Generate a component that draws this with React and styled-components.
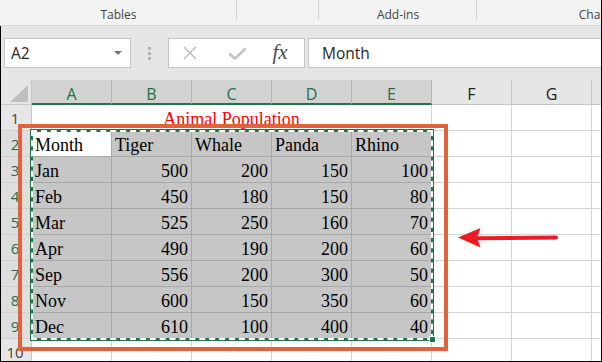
import React from 'react';
import styled, { createGlobalStyle } from 'styled-components';

const UI = '"Open Sans", "Noto Sans", Arial, sans-serif';
const SERIF = '"Liberation Serif", "Times New Roman", serif';
const GREEN = '#217346';

const GlobalStyle = createGlobalStyle`
  html, body { margin: 0; padding: 0; background: #fff; }
  body { overflow: hidden; }
`;

const Page = styled.div`
  position: relative;
  width: 602px;
  height: 362px;
  box-sizing: border-box;
  border-right: 1px solid #000;
  border-bottom: 1px solid #000;
  overflow: hidden;
  display: flex;
  flex-direction: column;
  font-family: ${UI};
`;

/* ribbon tab labels */
const Ribbon = styled.div`
  display: flex;
  flex-shrink: 0;
  height: 26px;
  box-sizing: border-box;
  background: #f3f3f3;
  border-bottom: 1px solid #d5d5d5;
  overflow: hidden;
`;
const RibbonGroup = styled.div`
  position: relative;
  flex: 0 0 ${p => p.$w}px;
  height: 25px;
  text-align: center;
  font-size: 12px;
  line-height: 30px;
  color: #444;
  white-space: nowrap;
  &::after {
    content: '';
    position: absolute;
    right: 0;
    top: 0;
    width: 1px;
    height: 20px;
    background: #d5d5d5;
  }
`;

/* name box + formula bar */
const FormulaArea = styled.div`
  display: flex;
  align-items: flex-start;
  flex-shrink: 0;
  height: 54px;
  box-sizing: border-box;
  padding: 12px 0 0 3px;
  background: #e6e6e6;
  border-left: 1px solid #000;
`;
const NameBox = styled.div`
  width: 127px;
  height: 30px;
  box-sizing: border-box;
  display: flex;
  align-items: center;
  justify-content: space-between;
  padding: 0 8px 0 6px;
  background: #fff;
  border: 1px solid #c6c6c6;
  font-size: 15.5px;
  color: #262626;
`;
const Caret = styled.span`
  width: 0;
  height: 0;
  border-left: 4px solid transparent;
  border-right: 4px solid transparent;
  border-top: 4px solid #777;
`;
const Splitter = styled.div`
  display: flex;
  flex-direction: column;
  gap: 2px;
  margin: 9px 0 0 17px;
`;
const Dot = styled.span`
  width: 3px;
  height: 3px;
  background: #b4b4b4;
`;
const ButtonBox = styled.div`
  display: flex;
  align-items: center;
  width: 137px;
  height: 30px;
  box-sizing: border-box;
  margin-left: 17px;
  background: #fff;
  border: 1px solid #c6c6c6;
`;
const IconSlot = styled.div`
  flex: 0 0 ${p => p.$w}px;
  display: flex;
  justify-content: center;
  align-items: center;
`;
const Fx = styled.span`
  font-family: ${SERIF};
  font-style: italic;
  font-size: 21px;
  color: #4a4a4a;
  line-height: 1;
  margin-top: -1px;
`;
const FormulaInput = styled.div`
  flex: 1;
  height: 30px;
  box-sizing: border-box;
  margin-left: 3px;
  display: flex;
  align-items: center;
  padding-left: 13px;
  background: #fff;
  border: 1px solid #c6c6c6;
  border-right: none;
  font-size: 15.5px;
  color: #262626;
`;

/* worksheet grid */
const Sheet = styled.div`
  flex: 1;
  display: flex;
  flex-direction: column;
  overflow: hidden;
  background: #fff;
  border-left: 1px solid #000;
`;
const Row = styled.div`
  display: flex;
  flex-shrink: 0;
  height: ${p => p.$h || 26}px;
`;
const Corner = styled.div`
  flex: 0 0 31px;
  box-sizing: border-box;
  background: #e6e6e6;
  border-right: 1px solid #c6c6c6;
  border-bottom: 1px solid #c6c6c6;
  display: flex;
`;
const ColHead = styled.div`
  flex: 0 0 80px;
  box-sizing: border-box;
  display: flex;
  justify-content: center;
  align-items: center;
  padding-top: 4px;
  font-size: 16px;
  background: ${p => (p.$sel ? '#d2d2d2' : '#e6e6e6')};
  color: ${p => (p.$sel ? GREEN : '#222')};
  border-right: 1px solid ${p => (p.$sel ? '#b4b4b4' : '#c6c6c6')};
  border-bottom: ${p => (p.$sel ? `2px solid ${GREEN}` : '1px solid #c6c6c6')};
`;
const RowHead = styled.div`
  flex: 0 0 31px;
  box-sizing: border-box;
  display: flex;
  justify-content: center;
  align-items: center;
  padding-right: 2px;
  font-size: 15px;
  background: ${p => (p.$sel ? '#dedede' : '#e6e6e6')};
  color: ${p => (p.$sel ? GREEN : '#444')};
  border-right: 1px solid #c6c6c6;
  border-bottom: 1px solid #d0d0d0;
`;
const Cell = styled.div`
  flex: 0 0 ${p => p.$w || 80}px;
  box-sizing: border-box;
  display: flex;
  align-items: flex-end;
  justify-content: ${p => (p.$num ? 'flex-end' : p.$center ? 'center' : 'flex-start')};
  padding: 0 3px;
  overflow: hidden;
  white-space: nowrap;
  font-family: ${SERIF};
  font-size: 18px;
  color: ${p => p.$color || '#000'};
  background: ${p => (p.$sel && !p.$active ? '#c6c6c6' : '#fff')};
  border-right: 1px solid ${p => (p.$sel ? '#a8a8a8' : '#d4d4d4')};
  border-bottom: 1px solid ${p => (p.$sel ? '#a8a8a8' : '#d4d4d4')};
`;

/* things drawn over the grid */
const RedBox = styled.div`
  position: absolute;
  left: 18px;
  top: 124px;
  width: 430px;
  height: 227px;
  box-sizing: border-box;
  border: 4px solid #e0623f;
  pointer-events: none;
`;
const Marquee = styled.div`
  position: absolute;
  left: 30px;
  top: 129px;
  width: 404px;
  height: 212px;
  box-sizing: border-box;
  border: 3px solid ${GREEN};
  pointer-events: none;
  &::after {
    content: '';
    position: absolute;
    inset: -2px;
    border: 2px dashed #fff;
  }
`;
const FillHandle = styled.span`
  position: absolute;
  right: -5px;
  bottom: -5px;
  width: 5px;
  height: 5px;
  background: ${GREEN};
  border: 1px solid #fff;
  z-index: 1;
`;
const Arrow = styled.svg`
  position: absolute;
  left: 450px;
  top: 220px;
`;

const tabs = [
  { w: 237, label: 'Tables' },
  { w: 82, label: '' },
  { w: 158, label: 'Add-ins' },
  { w: 240, label: 'Charts' },
];

const cols = ['A', 'B', 'C', 'D', 'E', 'F', 'G', 'H'];

const data = [
  ['Month', 'Tiger', 'Whale', 'Panda', 'Rhino'],
  ['Jan', 500, 200, 150, 100],
  ['Feb', 450, 180, 150, 80],
  ['Mar', 525, 250, 160, 70],
  ['Apr', 490, 190, 200, 60],
  ['Sep', 556, 200, 300, 50],
  ['Nov', 600, 150, 350, 60],
  ['Dec', 610, 100, 400, 40],
];

export default function App() {
  return (
    <>
      <GlobalStyle />
      <Page>
        <Ribbon>
          {tabs.map((t, i) => (
            <RibbonGroup key={i} $w={t.w}>{t.label}</RibbonGroup>
          ))}
        </Ribbon>

        <FormulaArea>
          <NameBox>
            A2
            <Caret />
          </NameBox>
          <Splitter>
            <Dot /><Dot /><Dot />
          </Splitter>
          <ButtonBox>
            <IconSlot $w={42}>
              <svg width="14" height="14" viewBox="0 0 14 14">
                <path d="M1 1L13 13M13 1L1 13" stroke="#b8b8b8" strokeWidth="1.4" fill="none" />
              </svg>
            </IconSlot>
            <IconSlot $w={52}>
              <svg width="19" height="13" viewBox="0 0 19 13">
                <path d="M1.2 6.5L6.8 11.6L17.8 1.2" stroke="#c4c4c4" strokeWidth="2.6" fill="none" />
              </svg>
            </IconSlot>
            <IconSlot $w={34}>
              <Fx>fx</Fx>
            </IconSlot>
          </ButtonBox>
          <FormulaInput>Month</FormulaInput>
        </FormulaArea>

        <Sheet>
          <Row $h={25}>
            <Corner>
              <svg width="30" height="24" viewBox="0 0 30 24">
                <polygon points="27,5 27,22 9,22" fill="#bfbfbf" />
              </svg>
            </Corner>
            {cols.map((c, i) => (
              <ColHead key={c} $sel={i < 5}>{c}</ColHead>
            ))}
          </Row>

          <Row>
            <RowHead>1</RowHead>
            <Cell $w={400} $center $color="#ff0000">Animal Population</Cell>
            <Cell /><Cell /><Cell />
          </Row>

          {data.map((r, ri) => (
            <Row key={ri}>
              <RowHead $sel>{ri + 2}</RowHead>
              {r.map((v, ci) => (
                <Cell key={ci} $sel $active={ri === 0 && ci === 0} $num={typeof v === 'number'}>
                  {v}
                </Cell>
              ))}
              <Cell /><Cell /><Cell />
            </Row>
          ))}

          <Row>
            <RowHead>10</RowHead>
            {cols.map(c => <Cell key={c} />)}
          </Row>
        </Sheet>

        <RedBox />
        <Marquee>
          <FillHandle />
        </Marquee>
        <Arrow width="115" height="35" viewBox="0 0 115 35">
          <path d="M26 18.2L106 17.6" stroke="#ec1c24" strokeWidth="4" strokeLinecap="round" fill="none" />
          <polygon points="8,17.4 30.5,8 27,17.8 30.5,27.4" fill="#ec1c24" />
        </Arrow>
      </Page>
    </>
  );
}
